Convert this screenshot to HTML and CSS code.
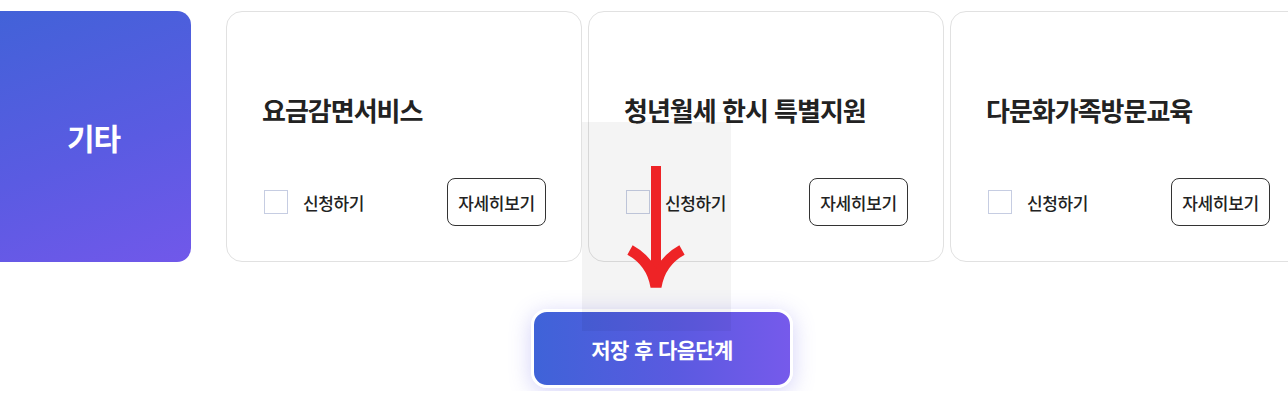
FILE: index.html
```html
<!DOCTYPE html>
<html lang="ko">
<head>
    <meta charset="UTF-8">
    <meta name="viewport" content="width=device-width, initial-scale=1.0">
    <title>서비스 신청</title>
    <link rel="stylesheet" href="styles.css">
</head>
<body>
    <div class="page">
        <div class="service-row">
            <div class="category-card">기타</div>

            <div class="service-card">
                <h3 class="service-title">요금감면서비스</h3>
                <div class="service-footer">
                    <label class="apply">
                        <input type="checkbox" class="apply-check">
                        <span>신청하기</span>
                    </label>
                    <button type="button" class="detail-btn">자세히보기</button>
                </div>
            </div>

            <div class="service-card">
                <h3 class="service-title">청년월세 한시 특별지원</h3>
                <div class="service-footer">
                    <label class="apply">
                        <input type="checkbox" class="apply-check">
                        <span>신청하기</span>
                    </label>
                    <button type="button" class="detail-btn">자세히보기</button>
                </div>
            </div>

            <div class="service-card">
                <h3 class="service-title">다문화가족방문교육</h3>
                <div class="service-footer">
                    <label class="apply">
                        <input type="checkbox" class="apply-check">
                        <span>신청하기</span>
                    </label>
                    <button type="button" class="detail-btn">자세히보기</button>
                </div>
            </div>
        </div>

        <div class="next-row">
            <button type="button" class="next-btn">저장 후 다음단계</button>
        </div>

        <!-- guide overlay pointing to the next button -->
        <div class="guide">
            <svg class="guide-arrow" width="149" height="209" viewBox="0 0 149 209">
                <line x1="74" y1="44" x2="74" y2="156" stroke="#ee2326" stroke-width="10"/>
                <path d="M48 128 Q70 140 74 165 Q78 140 100 128" fill="none" stroke="#ee2326" stroke-width="11"/>
            </svg>
        </div>
    </div>
</body>
</html>
```

FILE: styles.css
```css
body {
    margin: 0;
    font-family: "Noto Sans CJK KR", "Noto Sans", sans-serif;
    background-color: #fff;
    color: #222;
}

.page {
    position: relative;
    height: 391px;
    padding-top: 11px;
    box-sizing: border-box;
    overflow: hidden;
}

.service-row {
    display: flex;
    gap: 6px;
    width: max-content;
}

.category-card {
    width: 191px;
    height: 251px;
    margin-right: 29px;
    flex-shrink: 0;
    display: flex;
    align-items: center;
    justify-content: center;
    padding-right: 4px;
    box-sizing: border-box;
    border-radius: 0 14px 14px 0;
    background: linear-gradient(160deg, #4262d8 0%, #5a5be2 55%, #7158ea 100%);
    color: #fff;
    font-size: 30px;
    font-weight: 700;
    letter-spacing: -1px;
}

.service-card {
    width: 356px;
    height: 251px;
    flex-shrink: 0;
    box-sizing: border-box;
    padding: 0 35px 35px 35px;
    border: 1px solid #e1e1e1;
    border-radius: 16px;
    background-color: #fff;
    display: flex;
    flex-direction: column;
    justify-content: flex-end;
}

.service-title {
    margin: 0 0 51px 0;
    font-size: 26px;
    font-weight: 700;
    line-height: 34px;
    letter-spacing: -1px;
    color: #222;
}

.service-footer {
    display: flex;
    align-items: center;
    justify-content: space-between;
}

.apply {
    display: flex;
    align-items: center;
    gap: 15px;
    font-size: 17px;
    font-weight: 500;
    letter-spacing: -0.4px;
    color: #222;
}

.apply-check {
    appearance: none;
    width: 24px;
    height: 24px;
    margin: 0 0 0 2px;
    border: 1px solid #c6cde2;
    background-color: #fff;
}

.detail-btn {
    width: 99px;
    height: 48px;
    padding: 0;
    border: 1px solid #333;
    border-radius: 8px;
    background-color: #fff;
    font-family: inherit;
    font-size: 17px;
    font-weight: 500;
    letter-spacing: -0.3px;
    color: #222;
}

.next-row {
    display: flex;
    justify-content: center;
    padding-left: 36px;
    margin-top: 47px;
}

.next-btn {
    width: 262px;
    height: 79px;
    border: 3px solid #fff;
    border-radius: 16px;
    background: linear-gradient(90deg, #3f63d8 0%, #5a5ae0 55%, #765aeb 100%);
    box-shadow: 0 4px 22px rgba(98, 90, 230, 0.28);
    color: #fff;
    font-family: inherit;
    font-size: 21px;
    font-weight: 700;
    letter-spacing: -0.6px;
}

.guide {
    position: absolute;
    left: 582px;
    top: 122px;
    width: 149px;
    height: 209px;
    background-color: rgba(0, 0, 0, 0.045);
}

.guide-arrow {
    display: block;
}
```
